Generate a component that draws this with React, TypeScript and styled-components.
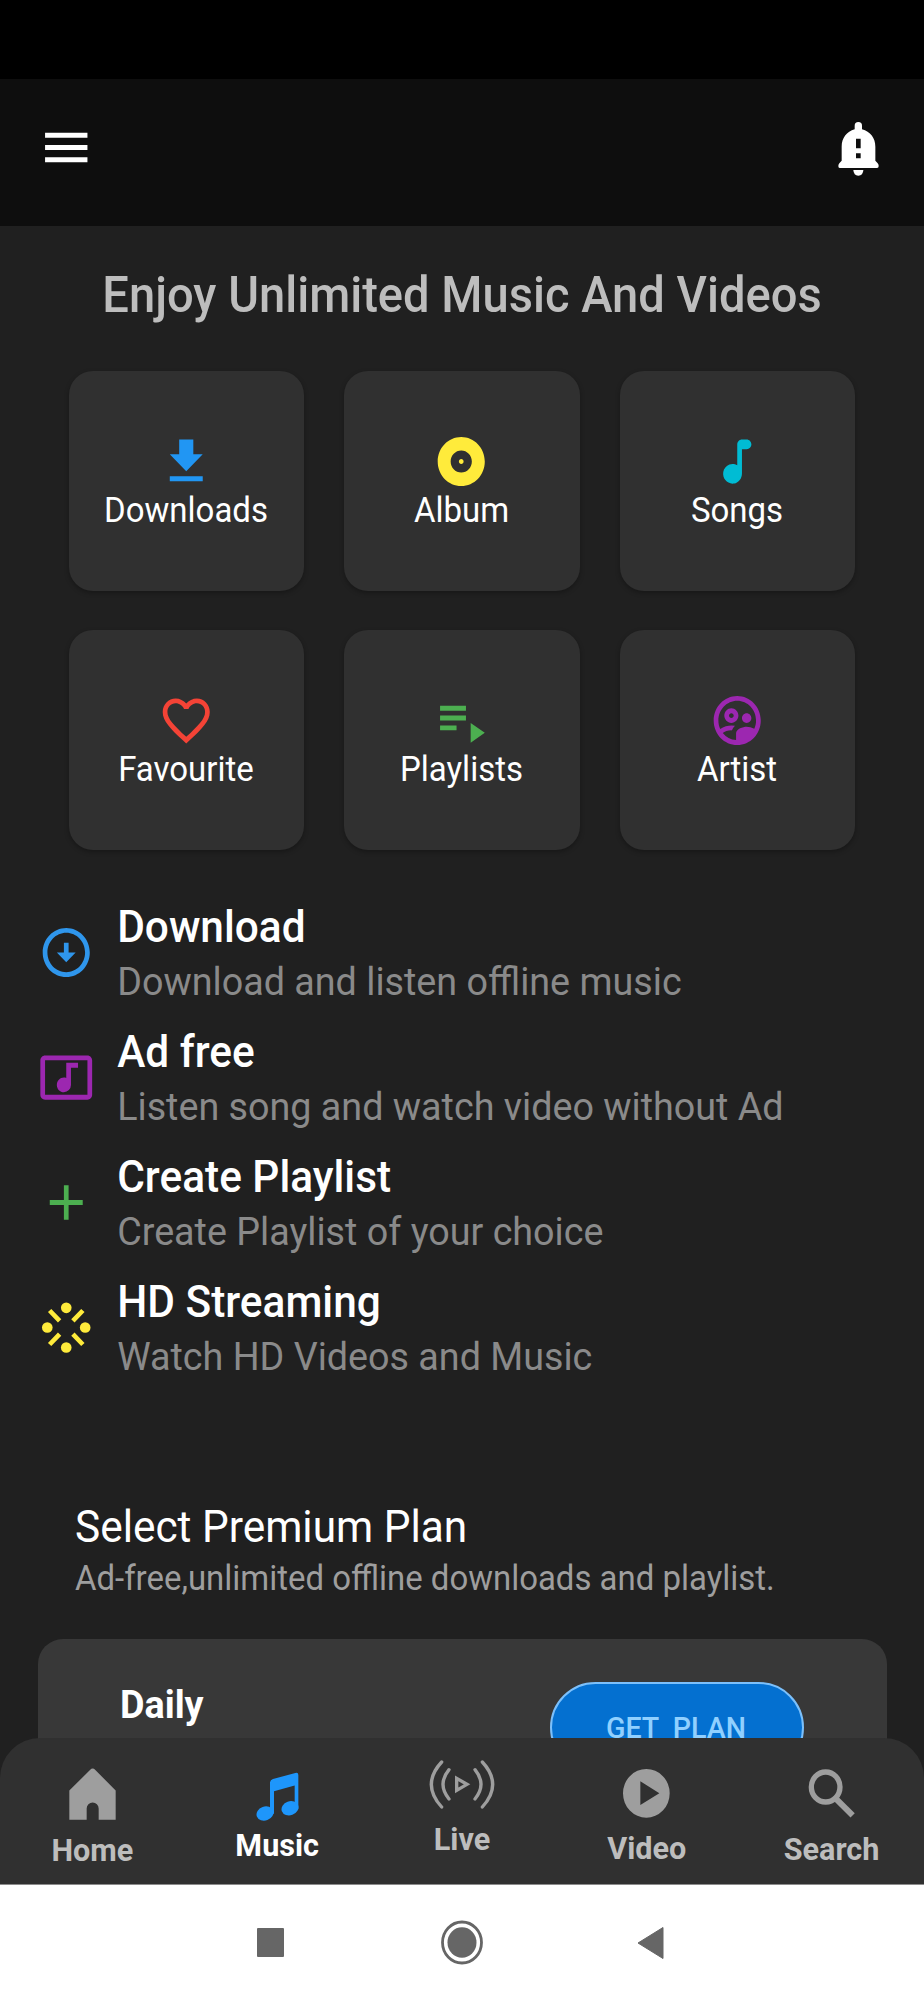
import React from 'react';
import styled, { createGlobalStyle } from 'styled-components';
import {
  MdAdd,
  MdAlbum,
  MdFavoriteBorder,
  MdMenu,
  MdOutlineArrowCircleDown,
  MdOutlineMusicVideo,
  MdOutlineSupervisedUserCircle,
} from 'react-icons/md';

const GlobalStyle = createGlobalStyle`
  * { box-sizing: border-box; }
  body { margin: 0; background: #202020; }
`;

const Screen = styled.div`
  width: 924px;
  height: 2000px;
  display: flex;
  flex-direction: column;
  overflow: hidden;
  background: #202020;
  color: #fff;
  font-family: Roboto, 'Liberation Sans', sans-serif;
`;

const StatusBar = styled.div`
  height: 79px;
  flex: none;
  background: #000;
`;

const AppBar = styled.header`
  height: 147px;
  flex: none;
  padding: 0 38px 10px;
  display: flex;
  align-items: center;
  justify-content: space-between;
  background: #0e0e0e;
`;

const IconButton = styled.button`
  width: 56px;
  height: 60px;
  padding: 0;
  border: 0;
  background: none;
  color: #fff;
  display: flex;
  align-items: center;
  justify-content: center;
`;

/* Material icons are drawn slightly taller than wide, like the type. */
const Glyph = styled.span<{ $color?: string }>`
  display: block;
  line-height: 0;
  color: ${(p) => p.$color ?? 'inherit'};
  svg {
    width: 56.5px;
    height: 59px;
  }
`;

const Text = styled.span<{
  $size: number;
  $line: number;
  $color?: string;
  $weight?: number;
}>`
  display: block;
  font-size: ${(p) => p.$size}px;
  line-height: ${(p) => p.$line}px;
  font-weight: ${(p) => p.$weight ?? 400};
  color: ${(p) => p.$color ?? '#fff'};
  white-space: pre;
  transform: scaleY(1.045);
`;

const Content = styled.main`
  height: 1658px;
  flex: none;
  overflow: hidden;
  display: flex;
  flex-direction: column;
  & > * {
    flex: none;
  }
`;

const Heading = styled.h1`
  margin: 0;
  padding-top: 39px;
  height: 144.5px;
  text-align: center;
`;

const CardGrid = styled.section`
  display: grid;
  grid-template-columns: repeat(3, 235.5px);
  grid-auto-rows: 220px;
  column-gap: 40px;
  row-gap: 39.5px;
  justify-content: center;
`;

const Card = styled.button`
  padding: 1px 1px 0 0;
  border: 0;
  border-radius: 24px;
  background: #303030;
  box-shadow: 0 2px 5px rgba(0, 0, 0, 0.3);
  font-family: inherit;
  display: flex;
  flex-direction: column;
  align-items: center;
  justify-content: center;
`;

const FeatureList = styled.ul`
  list-style: none;
  margin: 0;
  padding: 39.5px 0 0 37.7px;
`;

const Feature = styled.li`
  height: 125px;
  display: flex;
  align-items: center;
  gap: 23px;
`;

const FeatureText = styled.div`
  padding-top: 6px;
`;

const PlanIntro = styled.section`
  padding: 110.5px 0 0 75px;
`;

const PlanCard = styled.section`
  margin: 35px 37.5px 0 38px;
  height: 300px;
  border-radius: 25px;
  background: #383838;
  padding: 43px 82.5px 0 82px;
  display: flex;
  justify-content: space-between;
  align-items: flex-start;
`;

const PlanButton = styled.button`
  width: 254px;
  height: 91px;
  padding: 0 2px 0 0;
  border: 2px solid #7cc0fb;
  border-radius: 46px;
  background: #0470d0;
  font-family: inherit;
`;

const BottomNav = styled.nav`
  position: relative;
  z-index: 1;
  flex: none;
  height: 146px;
  margin-top: -146px;
  border-radius: 40px 40px 0 0;
  background: #303030;
  display: grid;
  grid-template-columns: repeat(5, 1fr);
`;

const NavItem = styled.a<{ $top: number; $gap: number }>`
  display: flex;
  flex-direction: column;
  align-items: center;
  padding-top: ${(p) => p.$top}px;
  gap: ${(p) => p.$gap}px;
  color: #9e9e9e;
  svg {
    flex: none;
    display: block;
  }
`;

const SystemBar = styled.footer`
  height: 116px;
  flex: none;
  border-top: 1px solid #8c8c8c;
  padding-left: 256.5px;
  background: #fff;
  display: flex;
  align-items: center;
  color: #666;
`;

const Recents = styled.span`
  width: 27.5px;
  height: 28.5px;
  border-radius: 1px;
  background: currentColor;
  margin-right: 156px;
`;

const stretch = { preserveAspectRatio: 'none' };

const BellIcon = () => (
  <svg width="46.7" height="60" viewBox="1118 172 140 180" fill="#fff" preserveAspectRatio="none">
    <path
      fillRule="evenodd"
      d="M1177 206V195a11 11 0 0 1 22 0V206C1224 213 1239 232 1239 258V300L1246 308Q1249 311 1249 316Q1249 322 1244 322H1132Q1128 322 1128 316Q1128 312 1131 308L1138 300V258C1138 232 1153 213 1177 206ZM1181 234H1195V263H1181ZM1181 278H1195V293H1181Z"
    />
    <path d="M1173 328H1203Q1202 345 1188 345Q1174 345 1173 328Z" />
  </svg>
);

const MaterialPath = ({ d }: { d: string }) => (
  <svg viewBox="0 0 24 24" fill="currentColor" preserveAspectRatio="none">
    <path d={d} />
  </svg>
);

const BurstIcon = () => (
  <svg viewBox="114 471.5 170 177" fill="currentColor" preserveAspectRatio="none">
    <circle cx="199" cy="501" r="16" />
    <circle cx="199" cy="620" r="16" />
    <circle cx="142" cy="560" r="16" />
    <circle cx="256" cy="560" r="16" />
    <path
      d="M149 509L179 540M249 509L219 540M149 611L179 580M249 611L219 580"
      stroke="currentColor"
      strokeWidth="14"
    />
  </svg>
);

const HomeIcon = () => (
  <svg width="47" height="52" viewBox="207 112 141 157" fill="currentColor" preserveAspectRatio="none">
    <path d="M270 118Q278 109 286 118L347 180V268H296V234A18 18 0 0 0 260 234V268H208V180Z" />
  </svg>
);

const MusicIcon = () => (
  <svg width="43" height="49.5" viewBox="764 126 129 149" fill="#1e96fb" preserveAspectRatio="none">
    <path d="M806 157Q807 149 815 147L882 129Q891 127 891 135V238H880V167L818 184V252H806Z" />
    <ellipse cx="791" cy="251" rx="26" ry="21" transform="rotate(-20 791 251)" />
    <ellipse cx="866" cy="235" rx="26" ry="21" transform="rotate(-20 866 235)" />
  </svg>
);

const LiveIcon = () => (
  <svg
    width="66"
    height="49"
    viewBox="1288 89 198 147"
    fill="none"
    stroke="currentColor"
    strokeWidth="10"
    strokeLinecap="round"
    strokeLinejoin="round"
    preserveAspectRatio="none"
  >
    <path d="M1326 95Q1264 162 1326 230M1348 118Q1312 162 1348 206" />
    <path d="M1448 95Q1510 162 1448 230M1426 118Q1462 162 1426 206" />
    <path d="M1371 144V180L1402 162Z" strokeLinejoin="miter" />
  </svg>
);

const VideoIcon = () => (
  <svg width="46.7" height="48.7" viewBox="485 118 140 146" fill="currentColor" preserveAspectRatio="none">
    <path
      fillRule="evenodd"
      d="M555 118A70 73 0 0 1 555 264A70 73 0 0 1 555 118ZM537 155V226L594 190.5Z"
    />
  </svg>
);

const SearchIcon = () => (
  <svg
    width="47.3"
    height="48.7"
    viewBox="1038 118 142 146"
    fill="none"
    stroke="currentColor"
    strokeWidth="16"
    preserveAspectRatio="none"
  >
    <ellipse cx="1091" cy="172" rx="43" ry="45" />
    <path d="M1120 205L1172 257" strokeWidth="18" />
  </svg>
);

const cards = [
  {
    label: 'Downloads',
    color: '#2196f3',
    icon: <MaterialPath d="M19 9h-4V3H9v6H5l7 7 7-7zM5 18v2h14v-2H5z" />,
  },
  { label: 'Album', color: '#ffeb3b', icon: <MdAlbum {...stretch} /> },
  {
    label: 'Songs',
    color: '#00bcd4',
    icon: (
      <MaterialPath d="M12 5v8.55c-.94-.54-2.1-.75-3.33-.32-1.34.48-2.37 1.67-2.61 3.07-.46 2.74 1.86 5.08 4.59 4.65 1.96-.31 3.35-2.11 3.35-4.1V7h2c1.1 0 2-.9 2-2s-.9-2-2-2h-2c-1.1 0-2 .9-2 2z" />
    ),
  },
  { label: 'Favourite', color: '#f44336', icon: <MdFavoriteBorder {...stretch} /> },
  {
    label: 'Playlists',
    color: '#4caf50',
    icon: <MaterialPath d="M3 6h11v2H3zM3 10h11v2H3zM3 14h7v2H3zM16 13v8l6-4z" />,
  },
  { label: 'Artist', color: '#9c27b0', icon: <MdOutlineSupervisedUserCircle {...stretch} /> },
];

const features = [
  {
    title: 'Download',
    text: 'Download and listen offline music',
    color: '#2f96ec',
    icon: <MdOutlineArrowCircleDown {...stretch} />,
  },
  {
    title: 'Ad free',
    text: 'Listen song and watch video without Ad',
    color: '#9c27b0',
    icon: <MdOutlineMusicVideo {...stretch} />,
  },
  {
    title: 'Create Playlist',
    text: 'Create Playlist of your choice',
    color: '#4caf50',
    icon: <MdAdd {...stretch} />,
  },
  {
    title: 'HD Streaming',
    text: 'Watch HD Videos and Music',
    color: '#ffeb3b',
    icon: <BurstIcon />,
  },
];

const navItems = [
  { label: 'Home', icon: <HomeIcon />, top: 29.5, gap: 13.5 },
  { label: 'Music', icon: <MusicIcon />, top: 34, gap: 6.5, active: true },
  { label: 'Live', icon: <LiveIcon />, top: 21.5, gap: 13.5 },
  { label: 'Video', icon: <VideoIcon />, top: 31.3, gap: 13 },
  { label: 'Search', icon: <SearchIcon />, top: 31.3, gap: 14 },
];

export default function App() {
  return (
    <Screen>
      <GlobalStyle />
      <StatusBar />
      <AppBar>
        <IconButton aria-label="Menu">
          <Glyph>
            <MdMenu {...stretch} />
          </Glyph>
        </IconButton>
        <IconButton aria-label="Notifications">
          <BellIcon />
        </IconButton>
      </AppBar>

      <Content>
        <Heading>
          <Text $size={47.1} $line={60} $weight={500} $color="#bdbdbd">
            Enjoy Unlimited Music And Videos
          </Text>
        </Heading>

        <CardGrid>
          {cards.map((c) => (
            <Card key={c.label}>
              <Glyph $color={c.color}>{c.icon}</Glyph>
              <Text $size={33} $line={40}>
                {c.label}
              </Text>
            </Card>
          ))}
        </CardGrid>

        <FeatureList>
          {features.map((f) => (
            <Feature key={f.title}>
              <Glyph $color={f.color}>{f.icon}</Glyph>
              <FeatureText>
                <Text $size={42.4} $line={52} $weight={500}>
                  {f.title}
                </Text>
                <Text $size={37.7} $line={57} $color="#8a8a8a">
                  {f.text}
                </Text>
              </FeatureText>
            </Feature>
          ))}
        </FeatureList>

        <PlanIntro>
          <Text $size={42.4} $line={54}>
            Select Premium Plan
          </Text>
          <Text $size={32.95} $line={50} $color="#9e9e9e">
            Ad-free,unlimited offline downloads and playlist.
          </Text>
        </PlanIntro>

        <PlanCard>
          <Text $size={37.7} $line={44} $weight={700}>
            Daily
          </Text>
          <PlanButton>
            <Text $size={28.6} $line={34} $weight={500} $color="#90d0ff">
              {'GET  PLAN'}
            </Text>
          </PlanButton>
        </PlanCard>
      </Content>

      <BottomNav>
        {navItems.map((n) => (
          <NavItem key={n.label} $top={n.top} $gap={n.gap}>
            {n.icon}
            <Text $size={30.6} $line={36} $weight={700} $color={n.active ? '#fff' : '#bdbdbd'}>
              {n.label}
            </Text>
          </NavItem>
        ))}
      </BottomNav>

      <SystemBar>
        <Recents />
        <svg width="44" height="45" viewBox="0 0 44 45">
          <ellipse cx="22" cy="22.5" rx="19.5" ry="20.5" fill="none" stroke="currentColor" strokeWidth="2.8" />
          <ellipse cx="22" cy="22.5" rx="14.5" ry="15.3" fill="currentColor" />
        </svg>
        <svg width="180" height="34" viewBox="0 0 180 34">
          <path d="M154 17L179 1.5V32.5Z" fill="currentColor" stroke="currentColor" strokeLinejoin="round" />
        </svg>
      </SystemBar>
    </Screen>
  );
}
